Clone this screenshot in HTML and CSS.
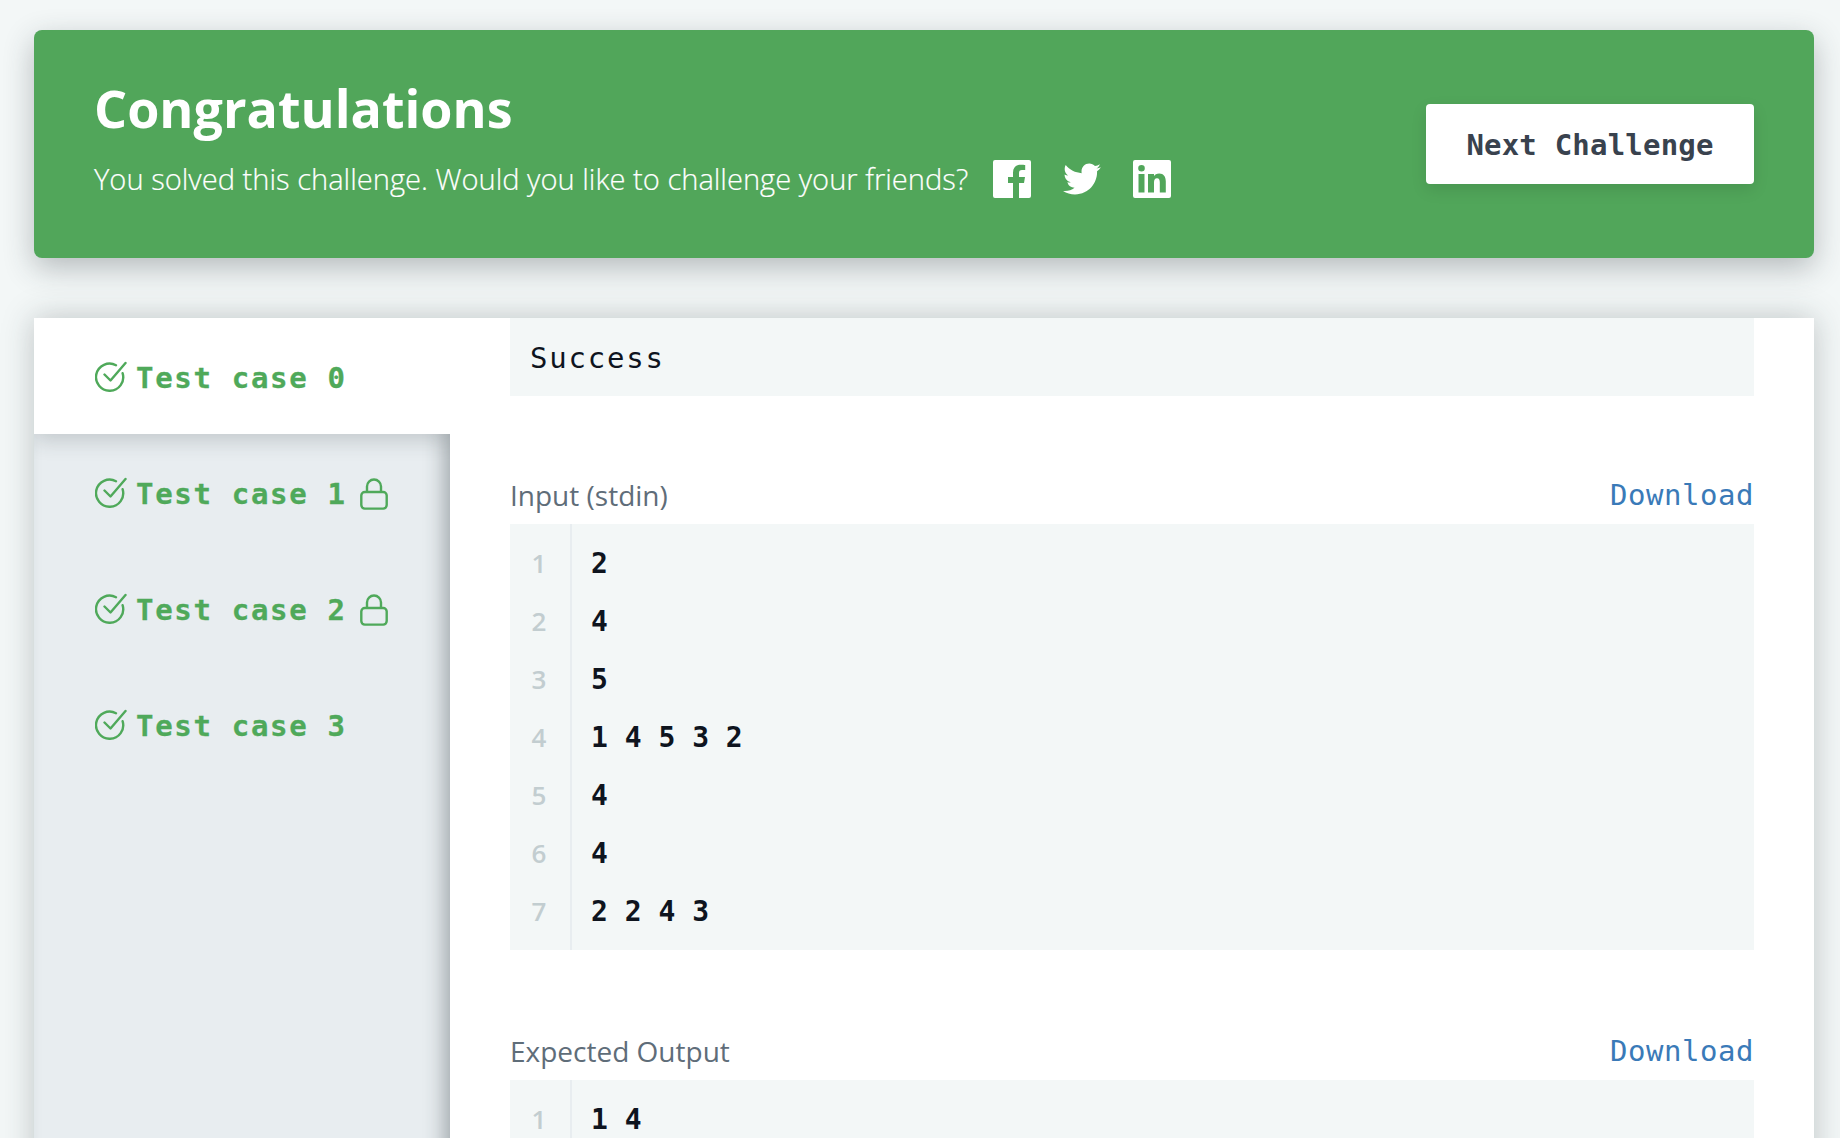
FILE: index.html
```html
<!DOCTYPE html>
<html lang="en">
<head>
<meta charset="utf-8">
<title>Congratulations</title>
<link rel="stylesheet" href="styles.css">
</head>
<body>
<svg class="defs" width="0" height="0" aria-hidden="true">
  <symbol id="check" viewBox="0 0 32 32"><path d="M27.6 13.2A13.6 13.6 0 1 1 21 5.2" fill="none" stroke="currentColor" stroke-width="2.4" stroke-linecap="round"/><path d="M9.5 14.5l6 6L30.5 3" fill="none" stroke="currentColor" stroke-width="2.4" stroke-linecap="round" stroke-linejoin="round"/></symbol>
  <symbol id="lock" viewBox="0 0 28 32"><rect x="1.3" y="14" width="25.4" height="16.6" rx="3.5" fill="none" stroke="currentColor" stroke-width="2.4"/><path d="M7 14V8.5a7 7 0 0 1 14 0V14" fill="none" stroke="currentColor" stroke-width="2.4"/></symbol>
</svg>
<main class="page">
  <section class="banner">
    <div class="banner-text">
      <h1 class="title">Congratulations</h1>
      <div class="share">
        <span class="share-text">You solved this challenge. Would you like to challenge your friends?</span>
        <svg class="social" viewBox="0 0 38 38"><path fill="#fff" fill-rule="evenodd" d="M2 0h34a2 2 0 0 1 2 2v34a2 2 0 0 1-2 2H26V23h5l1-6h-6v-4c0-2 .8-3 3-3h3.200V5c-1-.2-2.600-.3-4.400-.3-4.800 0-7.800 2.900-7.800 8V17h-5v6h5v15H2a2 2 0 0 1-2-2V2a2 2 0 0 1 2-2z"/></svg>
        <svg class="social" viewBox="1.500 2 21 21"><path fill="#fff" d="M22.460 6c-.77.35-1.600.58-2.460.69.88-.53 1.560-1.370 1.880-2.380-.83.5-1.750.85-2.720 1.050C18.370 4.500 17.260 4 16 4c-2.350 0-4.270 1.920-4.270 4.290 0 .34.040.67.11.98C8.280 9.090 5.110 7.380 3 4.790c-.37.63-.58 1.370-.58 2.150 0 1.490.75 2.810 1.910 3.560-.71 0-1.370-.2-1.950-.5v.03c0 2.080 1.480 3.820 3.440 4.210a4.220 4.220 0 0 1-1.930.07 4.280 4.280 0 0 0 4 2.980 8.521 8.521 0 0 1-5.330 1.840c-.34 0-.68-.02-1.020-.06C3.440 20.290 5.700 21 8.120 21 16 21 20.330 14.460 20.330 8.790c0-.19 0-.37-.01-.56.84-.6 1.560-1.360 2.140-2.230z"/></svg>
        <svg class="social" viewBox="0 0 38 38"><path fill="#fff" fill-rule="evenodd" d="M2 0h34a2 2 0 0 1 2 2v34a2 2 0 0 1-2 2H2a2 2 0 0 1-2-2V2a2 2 0 0 1 2-2zM5.500 14v18.500h6V14zM8.500 5a3.300 3.300 0 1 0 0 6.600 3.300 3.300 0 0 0 0-6.600zM15 14v18.500h6V22.500c0-2.600.8-4.200 3-4.200s2.800 1.700 2.800 4.300v9.900h6V21.500c0-5-2.200-8-6.600-8-2.500 0-4.300 1.100-5.200 2.700V14z"/></svg>
      </div>
    </div>
    <button class="next-btn">Next Challenge</button>
  </section>

  <section class="results">
    <nav class="tabs">
      <div class="tab tab-active"><svg class="check"><use href="#check"/></svg><span class="tab-label">Test case 0</span></div>
      <div class="tab"><svg class="check"><use href="#check"/></svg><span class="tab-label">Test case 1</span><svg class="lock"><use href="#lock"/></svg></div>
      <div class="tab"><svg class="check"><use href="#check"/></svg><span class="tab-label">Test case 2</span><svg class="lock"><use href="#lock"/></svg></div>
      <div class="tab"><svg class="check"><use href="#check"/></svg><span class="tab-label">Test case 3</span></div>
    </nav>
    <div class="detail">
      <div class="status">Success</div>
      <div class="block-head"><span class="block-label">Input (stdin)</span><a class="download">Download</a></div>
      <div class="code">
        <div class="line"><span class="num">1</span><span class="val">2</span></div>
        <div class="line"><span class="num">2</span><span class="val">4</span></div>
        <div class="line"><span class="num">3</span><span class="val">5</span></div>
        <div class="line"><span class="num">4</span><span class="val">1 4 5 3 2</span></div>
        <div class="line"><span class="num">5</span><span class="val">4</span></div>
        <div class="line"><span class="num">6</span><span class="val">4</span></div>
        <div class="line"><span class="num">7</span><span class="val">2 2 4 3</span></div>
      </div>
      <div class="block-head"><span class="block-label">Expected Output</span><a class="download">Download</a></div>
      <div class="code">
        <div class="line"><span class="num">1</span><span class="val">1 4</span></div>
      </div>
    </div>
  </section>
</main>
</body>
</html>
```
FILE: styles.css
```css
* { box-sizing: border-box; }
html, body { margin: 0; height: 100%; }
body { background: #f3f7f7; overflow: hidden; font-family: "Open Sans", sans-serif; }
.defs { position: absolute; }
.page { height: 1138px; padding: 30px 26px 0 34px; overflow: hidden; }

.banner {
  height: 228px;
  background: #51a65a;
  border-radius: 8px;
  padding: 0 60px;
  display: flex;
  align-items: center;
  justify-content: space-between;
  box-shadow: 0 10px 30px rgba(40, 50, 55, .3);
}
.banner-text { padding-bottom: 17px; }
.title { margin: 0 0 17px; color: #fff; font-size: 52px; line-height: 70px; font-weight: 700; }
.share { display: flex; align-items: center; }
.share-text { color: #fff; font-size: 29.1px; line-height: 38px; font-weight: 300; margin-right: 25px; -webkit-text-stroke: .2px currentColor; }
.social { width: 38px; height: 38px; margin-right: 32px; flex: none; }
.next-btn {
  width: 328px; height: 80px;
  padding: 2px 0 0;
  background: #fff; border: 0; border-radius: 4px;
  color: #39424e;
  font-family: "DejaVu Sans Mono", monospace; font-weight: 700; font-size: 29px; letter-spacing: .2px;
  box-shadow: 0 6px 16px rgba(0, 0, 0, .1);
}

.results {
  margin-top: 60px;
  height: 900px;
  background: #fff;
  display: flex;
  box-shadow: 0 0 30px rgba(40, 50, 55, .26);
}
.tabs {
  width: 416px; flex: none;
  background: #e8edf0;
  box-shadow: inset -10px 0 20px -4px rgba(40, 50, 55, .36);
}
.tab {
  height: 116px;
  padding-left: 61px;
  display: flex;
  align-items: center;
  color: #4fa95a;
}
.tab-active { background: #fff; position: relative; box-shadow: 0 6px 20px rgba(40, 50, 55, .2); clip-path: inset(0 0 -40px 0); }
.check { width: 32px; height: 32px; flex: none; margin: 0 9px 0 0; }
.tab-label { font-family: "DejaVu Sans Mono", monospace; font-weight: 700; font-size: 29px; letter-spacing: 1.7px; white-space: pre; padding-top: 4px; -webkit-text-stroke: .3px currentColor; }
.lock { width: 28px; height: 32px; flex: none; margin: 4px 0 0 13px; }

.detail { flex: 1; padding: 0 60px; min-width: 0; }
.status {
  height: 78px;
  background: #f3f7f7;
  padding: 2px 0 0 20px;
  display: flex; align-items: center;
  font-family: "DejaVu Sans Mono", monospace; font-size: 29px; letter-spacing: 1.8px; color: #0e141e;
}
.block-head {
  height: 44px;
  margin-top: 79px;
  display: flex; align-items: center; justify-content: space-between;
}
.status + .block-head { margin-top: 77px; }
.block-label { font-size: 28px; color: #5f6d79; }
.download { font-family: "DejaVu Sans Mono", monospace; font-size: 29px; letter-spacing: .55px; color: #3a7ab8; }
.code { background: #f3f7f7; padding: 10px 0; margin-top: 7px; position: relative; }
.code::before { content: ""; position: absolute; left: 60px; top: 0; bottom: 0; width: 2px; background: #e8edf0; }
.line { height: 58px; display: flex; align-items: center; }
.num {
  width: 62px; height: 58px; flex: none; text-align: center; padding-right: 4px;
  font-size: 26px; font-weight: 600; line-height: 58px; color: #c2cdd0;
}
.val { padding-left: 19px; font-family: "DejaVu Sans Mono", monospace; font-weight: 700; font-size: 28px; color: #0e141e; white-space: pre; }
```
